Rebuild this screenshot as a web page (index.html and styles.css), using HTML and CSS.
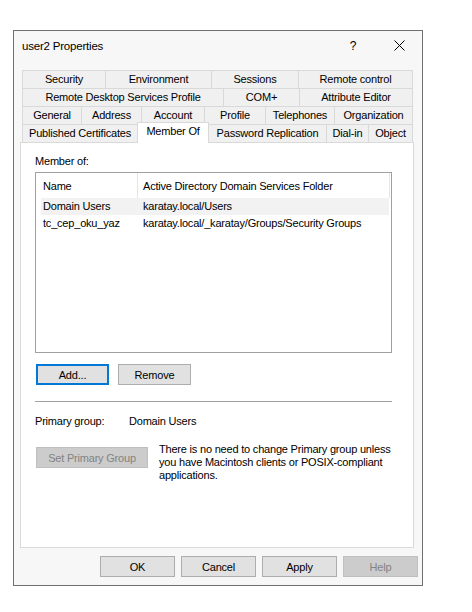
FILE: index.html
```html
<!DOCTYPE html>
<html>
<head>
<meta charset="utf-8">
<title>user2 Properties</title>
<link rel="stylesheet" href="styles.css">
</head>
<body>
<div class="window">
  <div class="titlebar">
    <div class="title">user2 Properties</div>
    <div class="tbtn help">?</div>
    <div class="tbtn close">
      <svg width="11" height="11" viewBox="0 0 11 11"><path d="M0.5 0.5 L10.5 10.5 M10.5 0.5 L0.5 10.5" stroke="#000" stroke-width="1" fill="none"/></svg>
    </div>
  </div>
  <div class="body">
    <div class="tabs">
      <div class="tabrow">
        <div class="tab t-security">Security</div>
        <div class="tab t-environment">Environment</div>
        <div class="tab t-sessions">Sessions</div>
        <div class="tab t-remote last">Remote control</div>
      </div>
      <div class="tabrow">
        <div class="tab t-rds">Remote Desktop Services Profile</div>
        <div class="tab t-com">COM+</div>
        <div class="tab t-attr last">Attribute Editor</div>
      </div>
      <div class="tabrow">
        <div class="tab t-general">General</div>
        <div class="tab t-address">Address</div>
        <div class="tab t-account">Account</div>
        <div class="tab t-profile">Profile</div>
        <div class="tab t-tel">Telephones</div>
        <div class="tab t-org last">Organization</div>
      </div>
      <div class="tabrow">
        <div class="tab t-certs">Published Certificates</div>
        <div class="tab t-member selected">Member Of</div>
        <div class="tab t-pwrep after-sel">Password Replication</div>
        <div class="tab t-dialin">Dial-in</div>
        <div class="tab t-object last">Object</div>
      </div>
    </div>
    <div class="panel">
      <div class="label">Member of:</div>
      <div class="list">
        <div class="lhead">
          <div class="c1">Name</div>
          <div class="c2">Active Directory Domain Services Folder</div>
        </div>
        <div class="lrow hl">
          <div class="c1">Domain Users</div>
          <div class="c2">karatay.local/Users</div>
        </div>
        <div class="lrow">
          <div class="c1">tc_cep_oku_yaz</div>
          <div class="c2">karatay.local/_karatay/Groups/Security Groups</div>
        </div>
      </div>
      <div class="btnrow">
        <button class="btn default">Add...</button>
        <button class="btn">Remove</button>
      </div>
      <div class="sep"></div>
      <div class="pg">
        <div class="k">Primary group:</div>
        <div class="v">Domain Users</div>
      </div>
      <div class="pgrow">
        <button class="btn wide disabled">Set Primary Group</button>
        <div class="desc">There is no need to change Primary group unless<br>you have Macintosh clients or POSIX-compliant<br>applications.</div>
      </div>
    </div>
  </div>
  <div class="footer">
    <button class="btn fbtn">OK</button>
    <button class="btn fbtn">Cancel</button>
    <button class="btn fbtn">Apply</button>
    <button class="btn fbtn disabled">Help</button>
  </div>
</div>
</body>
</html>
```
FILE: styles.css
```css
html, body {
  margin: 0;
  background: #ffffff;
}
body {
  font-family: "Liberation Sans", Arial, sans-serif;
  font-size: 11px;
  letter-spacing: -0.2px;
  color: #000;
}
.window {
  box-sizing: border-box;
  width: 410px;
  height: 556px;
  margin: 30px 0 0 13px;
  border: 1px solid #707070;
  background: #f7f7f7;
  display: flex;
  flex-direction: column;
}
.titlebar {
  height: 29px;
  display: flex;
  align-items: center;
}
.title {
  flex: 1;
  padding-left: 8px;
  font-size: 11.5px;
}
.tbtn {
  width: 46px;
  height: 29px;
  display: flex;
  align-items: center;
  justify-content: center;
}
.help {
  font-size: 12px;
  letter-spacing: 0;
}
.body {
  padding: 10px 8px 0 6px;
}
.tabs {
  margin: 0 1px 0 2px;
}
.tabrow {
  display: flex;
  height: 18px;
}
.tab {
  box-sizing: border-box;
  flex: none;
  height: 18px;
  border-top: 1px solid #d9d9d9;
  border-left: 1px solid #d9d9d9;
  background: #f0f0f0;
  text-align: center;
  line-height: 17px;
  white-space: nowrap;
}
.tab.last {
  border-right: 1px solid #d9d9d9;
}
.tab.selected {
  position: relative;
  z-index: 1;
  height: 21px;
  margin: -2px 0 -1px 0;
  padding-bottom: 3px;
  background: #ffffff;
  border-right: 1px solid #d9d9d9;
}
.tab.after-sel {
  border-left: none;
}
.t-security { width: 83px; }
.t-environment { width: 106px; }
.t-sessions { width: 87px; }
.t-remote { width: 115px; }
.t-rds { width: 201px; }
.t-com { width: 76px; }
.t-attr { width: 114px; }
.t-general { width: 59px; }
.t-address { width: 60px; }
.t-account { width: 63px; }
.t-profile { width: 61px; }
.t-tel { width: 69px; }
.t-org { width: 79px; }
.t-certs { width: 115px; }
.t-member { width: 72px; }
.t-pwrep { width: 117px; }
.t-dialin { width: 42px; }
.t-object { width: 45px; }

.panel {
  box-sizing: border-box;
  height: 406px;
  border: 1px solid #d9d9d9;
  background: #ffffff;
  padding: 10px 0 0 14px;
}
.label {
  line-height: 16px;
  margin-bottom: 3px;
}
.list {
  box-sizing: border-box;
  width: 357px;
  height: 181px;
  border: 1px solid #a0a0a0;
  background: #ffffff;
}
.lhead {
  display: flex;
  height: 25px;
}
.lhead .c1 {
  box-sizing: border-box;
  width: 102px;
  padding: 2px 0 0 7px;
  line-height: 22px;
  border-right: 1px solid #e5e5e5;
}
.lhead .c2 {
  box-sizing: border-box;
  width: 252px;
  padding: 2px 0 0 5px;
  line-height: 22px;
  border-right: 1px solid #e5e5e5;
  white-space: nowrap;
}
.lrow {
  display: flex;
  margin-left: 5px;
  width: 348px;
  height: 17px;
  line-height: 17px;
  white-space: nowrap;
}
.lrow .c1 {
  box-sizing: border-box;
  width: 102px;
  padding-left: 2px;
}
.lrow.hl {
  background: #f2f2f2;
}
.btnrow {
  display: flex;
  gap: 9px;
  margin: 11px 0 0 1px;
}
.btn {
  box-sizing: border-box;
  width: 73px;
  height: 21px;
  padding: 0;
  border: 1px solid #adadad;
  background: #e1e1e1;
  color: #000;
  font: inherit;
  letter-spacing: inherit;
  display: flex;
  align-items: center;
  justify-content: center;
}
.btn.default {
  border: 2px solid #0078d7;
}
.btn.disabled {
  background: #cccccc;
  border-color: #bfbfbf;
  color: #838383;
}
.sep {
  width: 357px;
  height: 1px;
  margin-top: 16px;
  background: #a0a0a0;
}
.pg {
  display: flex;
  margin-top: 11px;
  line-height: 16px;
}
.pg .k {
  width: 94px;
}
.pgrow {
  display: flex;
  align-items: flex-start;
  margin-top: 14px;
}
.btn.wide {
  width: 112px;
  margin: 4px 0 0 1px;
  flex: none;
}
.desc {
  margin-left: 11px;
  line-height: 13px;
  white-space: nowrap;
}
.footer {
  display: flex;
  justify-content: flex-end;
  gap: 6px;
  padding: 8px 4px 0 0;
}
.btn.fbtn {
  width: 75px;
}
```
